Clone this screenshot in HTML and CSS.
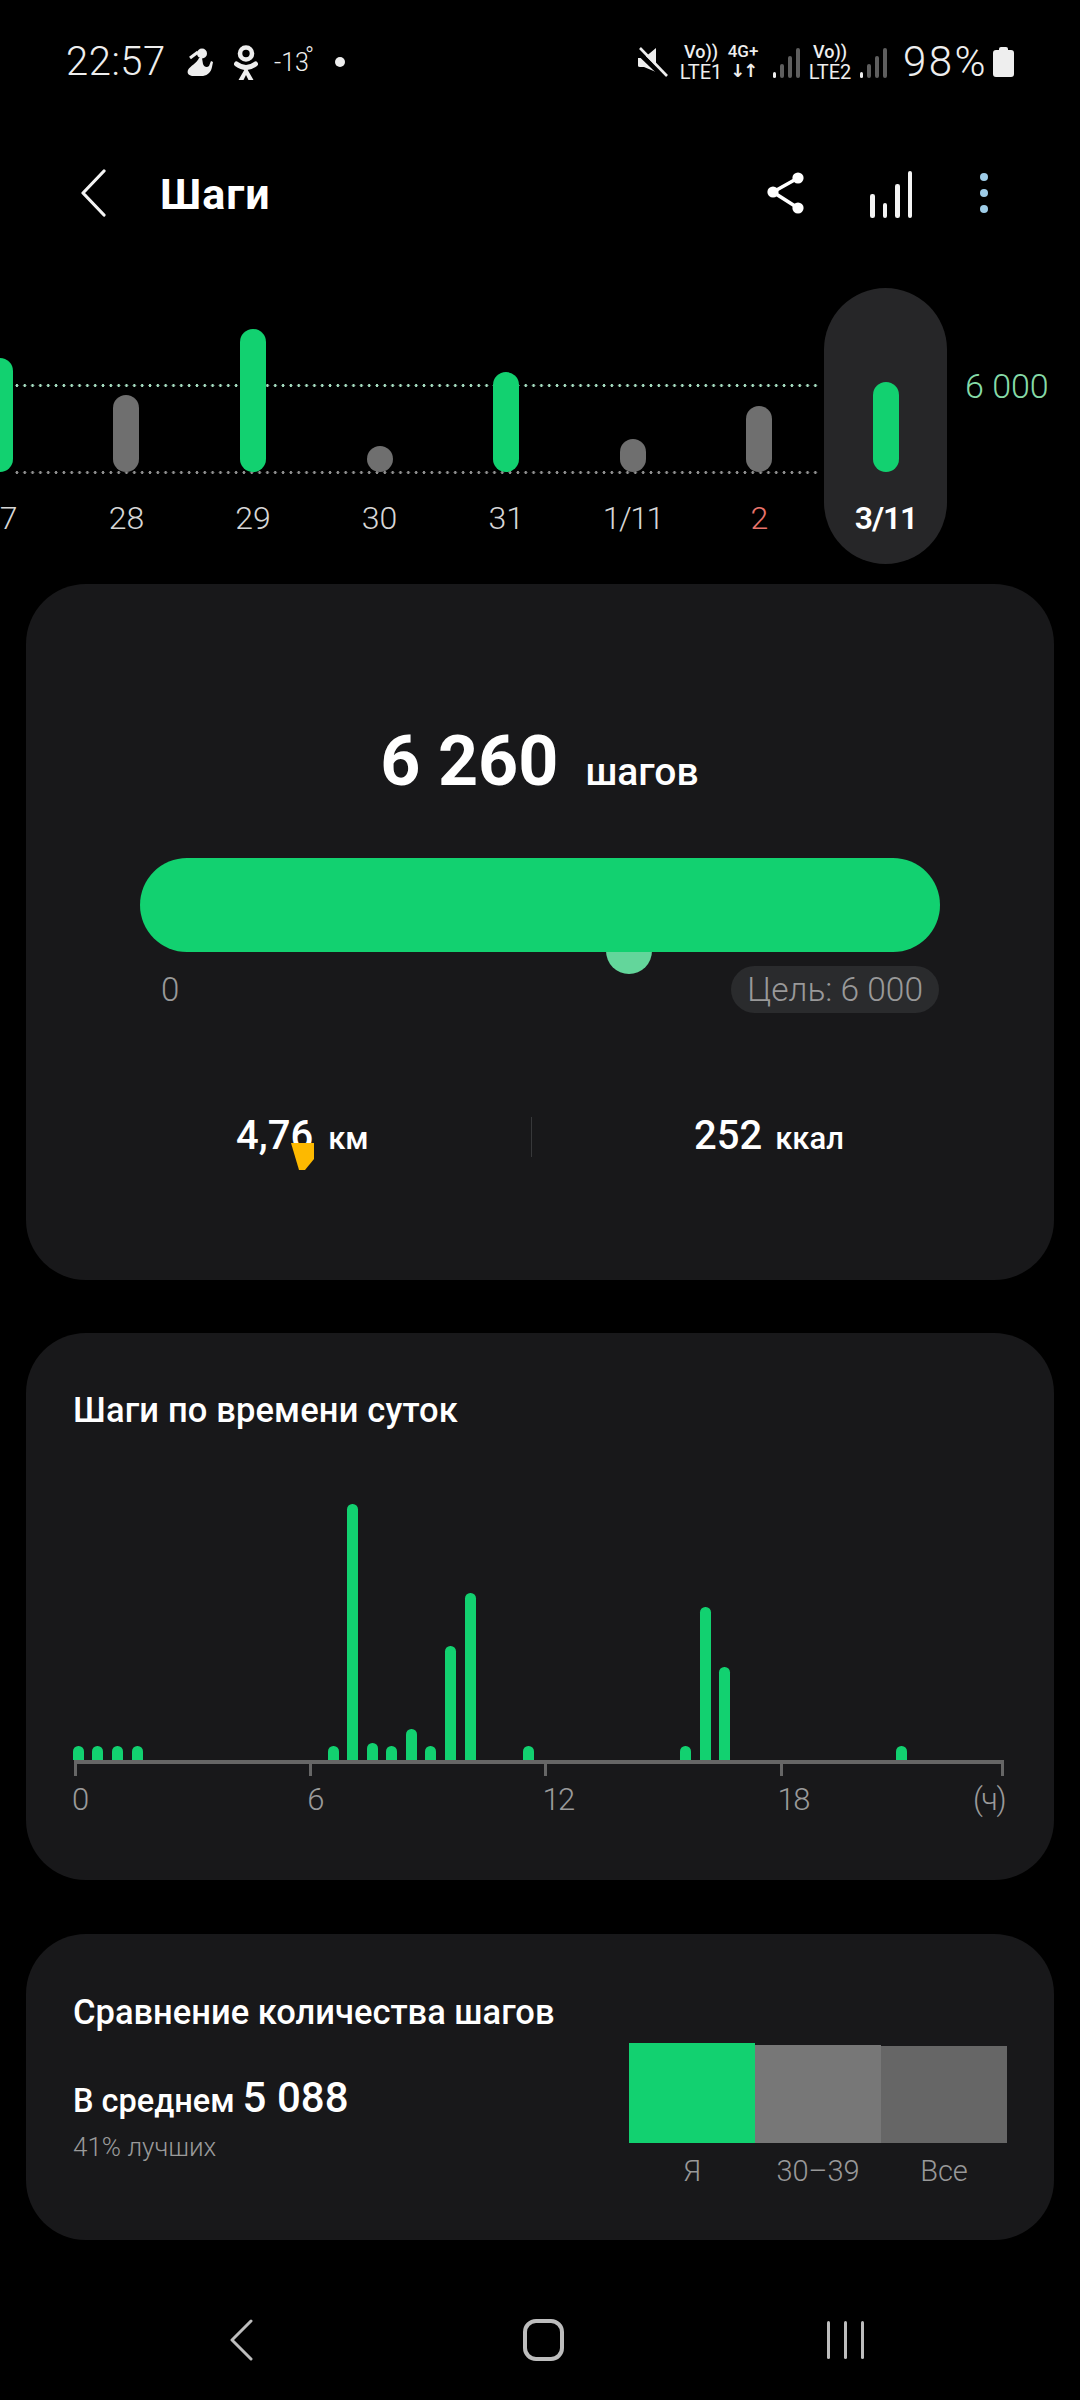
FILE: index.html
```html
<!DOCTYPE html>
<html lang="ru">
<head>
<meta charset="utf-8">
<title>Шаги</title>
<link rel="stylesheet" href="styles.css">
</head>
<body>
<div class="page">
  <div class="status">
    <span class="time">22:57</span>
    <svg class="ic-woman" viewBox="0 0 28 30"><circle cx="16" cy="5.500" r="5" fill="#eee"/><path d="M4 10 12 4" stroke="#eee" stroke-width="3" fill="none"/><path d="M13 10C11 15 4 18 2 22c-1 3 0 5 4 6h11c5-1 8-4 9-9l1-5-2-1-2 5c-2 2-5 1-6-2l-1-6z" fill="#eee"/></svg>
    <svg class="ic-ok" viewBox="0 0 24 35"><circle cx="12" cy="8.500" r="6" fill="none" stroke="#eee" stroke-width="4.600"/><path d="M2.500 19c6 4.500 13 4.500 19 0" fill="none" stroke="#eee" stroke-width="5" stroke-linecap="round"/><path d="M12 22 4.500 35h5L12 30l2.500 5h5z" fill="#eee"/></svg>
    <span class="temp">-13<sup class="deg">°</sup></span>
    <span class="dot"></span>
    <span class="status-gap"></span>
    <svg class="ic-mute" viewBox="0 0 31 30"><path d="M1 11h6l12-10v24L7 20H3c-2 0-2-1-2-2z" fill="#eee"/><path d="M0 4l27 26" stroke="#000" stroke-width="5"/><path d="M3 1l27 28" stroke="#eee" stroke-width="2.600"/></svg>
    <span class="net net-lte1"><span class="vo">Vo))</span><span class="lte">LTE1</span></span>
    <span class="net net-4g"><span class="g4">4G+</span><span class="arrows">↓↑</span></span>
    <span class="signal signal-a"><i class="s1"></i><i class="s2"></i><i class="s3"></i><i class="s4"></i></span>
    <span class="net net-lte2"><span class="vo">Vo))</span><span class="lte">LTE2</span></span>
    <span class="signal signal-b"><i class="s1"></i><i class="s2"></i><i class="s3"></i><i class="s4"></i></span>
    <span class="pct">98%</span>
    <svg class="ic-batt" viewBox="0 0 21 30"><path d="M6 2q0-2 2-2h5q2 0 2 2v1h3q3 0 3 3v21q0 3-3 3H3q-3 0-3-3V6q0-3 3-3h3z" fill="#eee"/></svg>
  </div>

  <header class="head">
    <svg class="ic-back" viewBox="0 0 26 48"><path d="M24 2 3 24l21 22" fill="none" stroke="#f4f4f4" stroke-width="3.200" stroke-linecap="round" stroke-linejoin="round"/></svg>
    <h1 class="head-title">Шаги</h1>
    <svg class="ic-share" viewBox="0 0 38 42"><path d="M31 6 6 20l25 16" fill="none" stroke="#fff" stroke-width="3.600"/><circle cx="31" cy="6" r="5.600" fill="#fff"/><circle cx="6" cy="20" r="5.600" fill="#fff"/><circle cx="31" cy="36" r="5.600" fill="#fff"/></svg>
    <span class="bars-ic"><i class="b1"></i><i class="b2"></i><i class="b3"></i><i class="b4"></i></span>
    <span class="kebab"><i></i><i></i><i></i></span>
  </header>

  <section class="week">
    <div class="guide guide-top"></div>
    <div class="guide guide-bottom"></div>
    <div class="goal-label">6 000</div>
    <div class="days">
      <div class="day"><div class="plot"><div class="bar bar-27 on"></div></div><span class="day-l">27</span></div>
      <div class="day"><div class="plot"><div class="bar bar-28"></div></div><span class="day-l">28</span></div>
      <div class="day"><div class="plot"><div class="bar bar-29 on"></div></div><span class="day-l">29</span></div>
      <div class="day"><div class="plot"><div class="bar bar-30"></div></div><span class="day-l">30</span></div>
      <div class="day"><div class="plot"><div class="bar bar-31 on"></div></div><span class="day-l">31</span></div>
      <div class="day"><div class="plot"><div class="bar bar-1"></div></div><span class="day-l tight">1/11</span></div>
      <div class="day"><div class="plot"><div class="bar bar-2"></div></div><span class="day-l red">2</span></div>
      <div class="day current"><div class="plot"><div class="bar bar-3 on"></div></div><span class="day-l now">3/11</span></div>
    </div>
  </section>

  <section class="card card-main">
    <div class="total"><span class="total-n">6 260</span><span class="total-u">шагов</span></div>
    <div class="progress-wrap">
      <div class="progress"></div>
      <div class="knob"></div>
    </div>
    <div class="scale"><span class="zero">0</span><span class="goal-pill">Цель: 6 000</span></div>
    <div class="stats">
      <div class="stat stat-left"><span class="stat-n">4,76</span><span class="stat-u">км</span><svg class="marker" viewBox="0 0 23 27"><path d="M0 0h23v16L14 27H8z" fill="#fdb900"/></svg></div>
      <div class="stat-div"></div>
      <div class="stat stat-right"><span class="stat-n">252</span><span class="stat-u">ккал</span></div>
    </div>
  </section>

  <section class="card card-time">
    <h2 class="card-title">Шаги по времени суток</h2>
    <div class="hours">
      <div class="h" style="left:0;height:14px"></div>
      <div class="h" style="left:19px;height:14px"></div>
      <div class="h" style="left:39px;height:14px"></div>
      <div class="h" style="left:59px;height:14px"></div>
      <div class="h" style="left:255px;height:14px"></div>
      <div class="h" style="left:274px;height:256px"></div>
      <div class="h" style="left:294px;height:17px"></div>
      <div class="h" style="left:313px;height:14px"></div>
      <div class="h" style="left:333px;height:31px"></div>
      <div class="h" style="left:352px;height:14px"></div>
      <div class="h" style="left:372px;height:114px"></div>
      <div class="h" style="left:392px;height:167px"></div>
      <div class="h" style="left:450px;height:14px"></div>
      <div class="h" style="left:607px;height:14px"></div>
      <div class="h" style="left:627px;height:153px"></div>
      <div class="h" style="left:646px;height:93px"></div>
      <div class="h" style="left:823px;height:14px"></div>
    </div>
    <div class="axis"><i></i><i></i><i></i><i></i><i></i></div>
    <div class="axis-labels"><span>0</span><span>6</span><span>12</span><span>18</span><span>(ч)</span></div>
  </section>

  <section class="card card-cmp">
    <h2 class="card-title">Сравнение количества шагов</h2>
    <div class="cmp">
      <div class="cmp-text">
        <div class="avg"><span class="avg-l">В среднем</span><span class="avg-n">5 088</span></div>
        <div class="rank">41% лучших</div>
      </div>
      <div class="cmp-chart">
        <div class="cmp-col"><div class="cmp-bar c-me"></div><span>Я</span></div>
        <div class="cmp-col"><div class="cmp-bar c-age"></div><span>30–39</span></div>
        <div class="cmp-col"><div class="cmp-bar c-all"></div><span>Все</span></div>
      </div>
    </div>
  </section>

  <nav class="nav">
    <svg class="nav-back" viewBox="0 0 24 42"><path d="M22 2 3 21l19 19" fill="none" stroke="#bdbdbd" stroke-width="3" stroke-linecap="round" stroke-linejoin="round"/></svg>
    <span class="nav-home"></span>
    <span class="nav-recent"><i></i><i></i><i></i></span>
  </nav>
</div>
</body>
</html>
```
FILE: styles.css
```css
* { box-sizing: border-box; }
html, body { margin: 0; padding: 0; background: #000; }
body { font-family: Roboto, "Liberation Sans", sans-serif; color: #fff; }
.page { width: 1080px; height: 2400px; overflow: hidden; display: flex; flex-direction: column; background: #000; }

/* status bar */
.status { height: 124px; display: flex; align-items: center; padding-left: 66px; color: #eee; flex: none; }
.time { font-size: 40px; font-weight: 300; letter-spacing: 0.5px; line-height: 1; width: 120px; }
.ic-woman { width: 28px; height: 30px; margin-top: 1px; }
.ic-ok { width: 24px; height: 35px; margin-left: 20px; }
.temp { font-size: 25px; font-weight: 300; margin-left: 16px; width: 48px; position: relative; line-height: 1; }
.deg { font-size: 24px; line-height: 0; position: absolute; top: 6px; left: 31px; vertical-align: baseline; }
.dot { width: 10px; height: 10px; border-radius: 50%; background: #eee; margin-left: 13px; }
.status-gap { flex: 1; }
.ic-mute { width: 31px; height: 30px; }
.net { display: flex; flex-direction: column; align-items: center; line-height: 1; }
.net-lte1 { width: 40px; margin-left: 13px; }
.net-4g { width: 32px; margin-left: 6px; }
.net-lte2 { width: 40px; margin-left: 10px; }
.vo { font-size: 18px; font-weight: 500; height: 19px; }
.lte { font-size: 20px; font-weight: 400; height: 20px; }
.g4 { font-size: 17px; font-weight: 500; height: 19px; }
.arrows { font-size: 18px; font-weight: 700; height: 20px; font-family: "DejaVu Sans", sans-serif; letter-spacing: -2px; }
.signal { display: flex; align-items: flex-end; gap: 4px; height: 30px; margin-top: 1px; }
.signal i { display: block; width: 4px; border-radius: 2px; background: #5e5e5e; }
.signal-a { margin-left: 14px; }
.signal-b { margin-left: 10px; }
.signal .s1 { height: 6px; background: #eee; width: 3px; }
.signal .s2 { height: 14px; }
.signal .s3 { height: 22px; }
.signal .s4 { height: 30px; }
.pct { font-size: 42px; font-weight: 300; letter-spacing: 2.500px; margin-left: 16px; line-height: 1; width: 90px; white-space: nowrap; }
.ic-batt { width: 21px; height: 30px; margin-right: 66px; }

/* header */
.head { height: 138px; flex: none; display: flex; align-items: center; padding-left: 80px; }
.ic-back { width: 26px; height: 48px; }
.head-title { margin: 3px 0 0 54px; font-size: 43px; font-weight: 700; letter-spacing: 1px; line-height: 1; width: 607px; }
.ic-share { width: 38px; height: 42px; }
.bars-ic { display: flex; align-items: flex-end; gap: 8px; height: 47px; margin-left: 65px; width: 40px; margin-top: 2px; }
.bars-ic i { display: block; width: 4.500px; flex: none; border-radius: 2.250px; background: #f4f4f4; }
.bars-ic .b1 { height: 24px; }
.bars-ic .b2 { height: 15px; }
.bars-ic .b3 { height: 34px; }
.bars-ic .b4 { height: 47px; }
.kebab { display: flex; flex-direction: column; gap: 8px; margin-left: 70px; }
.kebab i { display: block; width: 8px; height: 8px; border-radius: 50%; background: #9fcde8; }

/* week */
.week { position: relative; height: 276px; margin-top: 26px; flex: none; }
.guide { position: absolute; left: 14px; width: 806px; height: 3px; background-image: radial-gradient(circle, #a5dcc0 1.300px, transparent 1.700px); background-size: 7.830px 3px; background-position: -1px 0; }
.guide-top { top: 96px; }
.guide-bottom { top: 183px; background-image: radial-gradient(circle, #8f8f8f 1.300px, transparent 1.700px); }
.goal-label { position: absolute; left: 965px; top: 79px; font-size: 34px; font-weight: 300; line-height: 38px; color: #86dba8; }
.days { display: flex; position: relative; margin-left: -63.500px; height: 100%; }
.day { width: 126.600px; flex: none; display: flex; flex-direction: column; align-items: center; }
.plot { height: 184px; flex: none; display: flex; align-items: flex-end; }
.bar { width: 26px; border-radius: 13px; background: #6f6f6f; }
.bar.on { background: #12d170; }
.bar-27 { height: 114px; }
.bar-28 { height: 77px; }
.bar-29 { height: 143px; }
.bar-30 { height: 26px; }
.bar-31 { height: 100px; }
.bar-1 { height: 33px; }
.bar-2 { height: 66px; }
.bar-3 { height: 90px; }
.day-l { font-size: 32px; font-weight: 300; line-height: 38px; margin-top: 27px; color: #d6d6d6; white-space: nowrap; }
.day-l.tight { letter-spacing: -1.500px; }
.day-l.red { color: #e8736b; }
.day-l.now { color: #fff; font-weight: 600; letter-spacing: -1.200px; }
.current { background: #262628; width: 123px; margin-left: 1.800px; border-radius: 62px; }

/* cards */
.card { margin: 20px 26px 0; background: #18181a; border-radius: 60px; flex: none; }
.card-main { height: 696px; padding-top: 135px; }
.card-time { height: 547px; margin-top: 53px; padding: 57px 47px 0; position: relative; }
.card-cmp { height: 306px; margin-top: 54px; padding: 58px 47px 0; }
.card-title { margin: 0; font-size: 34.500px; line-height: 40px; font-weight: 500; }
.card-time .card-title { letter-spacing: 0.150px; }

.total { display: flex; justify-content: center; align-items: baseline; line-height: 84px; padding-right: 1px; }
.total-n { font-size: 70px; font-weight: 700; }
.total-u { font-size: 39px; font-weight: 500; margin-left: 27px; }

.progress-wrap { position: relative; margin: 44px 114px 0; height: 94px; }
.progress { position: relative; z-index: 1; height: 94px; border-radius: 47px; background: #12d170; }
.knob { position: absolute; left: 466px; top: 50px; width: 46px; height: 66px; border-radius: 23px; background: #63d69b; }
.scale { display: flex; justify-content: space-between; align-items: center; margin: 14px 115px 0 135px; }
.zero { font-size: 33px; font-weight: 300; color: #999; }
.goal-pill { height: 47px; padding: 0 16px; border-radius: 24px; background: #2a2b2d; font-size: 33.500px; font-weight: 300; line-height: 47px; color: #999; }

.stats { display: flex; align-items: center; margin-top: 104px; height: 40px; position: relative; }
.stat { display: flex; align-items: baseline; flex: none; position: relative; white-space: nowrap; }
.stat-left { width: 505px; padding-left: 210px; }
.stat-left .stat-u { margin-left: 15px; }
.stat-right { padding-left: 162px; }
.stat-n { font-size: 40px; font-weight: 500; line-height: 40px; }
.stat-u { font-size: 31px; font-weight: 500; line-height: 40px; margin-left: 13px; }
.stat-div { width: 1px; height: 40px; background: #37383a; flex: none; }
.marker { position: absolute; left: 265px; top: 27px; width: 23px; height: 27px; }

/* hourly */
.hours { position: relative; height: 256px; margin: 74px 0 0; }
.h { position: absolute; bottom: 0; width: 10.500px; background: #12d170; border-radius: 5.250px 5.250px 0 0; }
.axis { height: 16px; border-top: 4px solid #666; width: 930px; display: grid; grid-template-columns: repeat(3, 235.200px) 1fr auto; margin-left: 1px; }
.axis i { display: block; width: 3px; height: 12px; background: #666; }
.axis-labels { display: grid; grid-template-columns: repeat(3, 235.200px) 1fr auto; width: 933px; margin-left: -1px; font-size: 31px; font-weight: 300; letter-spacing: -1.500px; line-height: 38px; color: #9a9a9a; margin-top: 5px; }

/* compare */
.cmp { display: flex; justify-content: space-between; margin-top: 11px; }
.cmp-text { padding-top: 32px; }
.avg { display: flex; align-items: baseline; line-height: 46px; }
.avg-l { font-size: 32.500px; font-weight: 500; }
.avg-n { font-size: 42px; font-weight: 500; margin-left: 8px; }
.rank { font-size: 26px; font-weight: 300; color: #9a9a9a; line-height: 30px; margin-top: 8px; }
.cmp-chart { display: flex; align-items: flex-start; height: 145px; }
.cmp-col { width: 126px; display: flex; flex-direction: column; align-items: center; height: 100%; justify-content: flex-end; }
.cmp-col span { font-size: 29px; font-weight: 300; color: #999; line-height: 34px; margin-top: 11px; }
.cmp-bar { width: 100%; }
.c-me { background: #12d170; height: 100px; }
.c-age { background: #777; height: 98px; }
.c-all { background: #666; height: 97px; }

/* nav */
.nav { flex: 1; position: relative; display: flex; align-items: flex-start; padding-top: 79px; padding-left: 229px; }
.nav-back { width: 24px; height: 42px; }
.nav-home { width: 41px; height: 42px; border: 4px solid #bdbdbd; border-radius: 13px; margin-left: 270px; }
.nav-recent { display: flex; gap: 14px; margin-left: 263px; padding-top: 2px; }
.nav-recent i { display: block; width: 3px; height: 38px; border-radius: 2px; background: #bdbdbd; }
```
